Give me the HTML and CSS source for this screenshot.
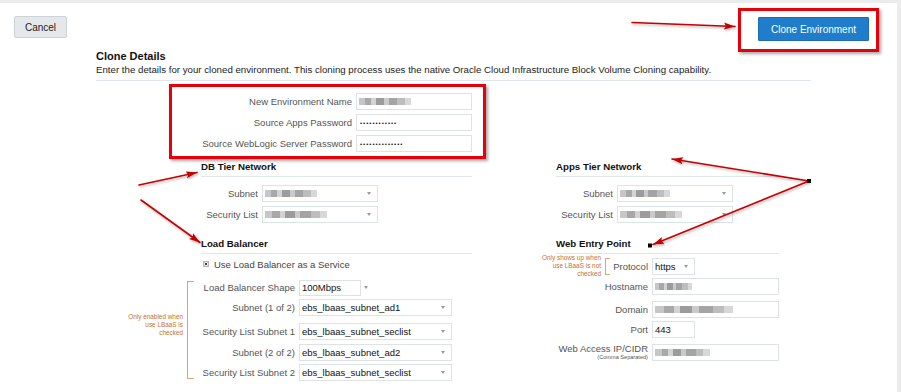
FILE: index.html
```html
<!DOCTYPE html>
<html>
<head>
<meta charset="utf-8">
<title>Clone Environment</title>
<link rel="stylesheet" href="styles.css">
</head>
<body>
<div class="page">
  <div class="topbar">
    <button class="btn-cancel">Cancel</button>
    <div class="callout callout-btn"><button class="btn-primary">Clone Environment</button></div>
  </div>

  <div class="content">
    <h1 class="title">Clone Details</h1>
    <p class="desc">Enter the details for your cloned environment. This cloning process uses the native Oracle Cloud Infrastructure Block Volume Cloning capability.</p>

    <div class="callout callout-fields">
      <div class="row"><label class="lbl lbl-main">New Environment Name</label><div class="field w116"><span class="mosaic m-env"></span></div></div>
      <div class="row"><label class="lbl lbl-main">Source Apps Password</label><div class="field w116"><span class="dots">••••••••••••</span></div></div>
      <div class="row"><label class="lbl lbl-main">Source WebLogic Server Password</label><div class="field w116"><span class="dots">••••••••••••••</span></div></div>
    </div>

    <div class="columns">
      <div class="col col-left">
        <section class="sec">
          <h2 class="sec-title">DB Tier Network</h2>
          <div class="rows net-rows">
            <div class="row"><label class="lbl lbl-dbnet">Subnet</label><div class="field select w116"><span class="mosaic m-dbsub"></span><i class="caret"></i></div></div>
            <div class="row"><label class="lbl lbl-dbnet">Security List</label><div class="field select w116"><span class="mosaic m-dbsec"></span><i class="caret"></i></div></div>
          </div>
        </section>
        <section class="sec sec-second">
          <h2 class="sec-title">Load Balancer</h2>
          <div class="check-row">
            <svg class="checkbox" width="6" height="6" viewBox="0 0 6 6"><rect x="0.5" y="0.5" width="5" height="5" fill="#f4f4f4" stroke="#b5b5b5"/><path d="M1.8 1.8 L4.2 4.2 M4.2 1.8 L1.8 4.2" stroke="#222" stroke-width="0.9"/></svg>
            <span>Use Load Balancer as a Service</span>
          </div>
          <div class="rows lb-rows">
            <span class="bracket lb-bracket"></span>
            <div class="note lb-note">Only enabled when<br>use LBaaS is<br>checked</div>
            <div class="row"><label class="lbl lbl-lb">Load Balancer Shape</label><div class="field w62 shape">100Mbps</div><i class="caret caret-out"></i></div>
            <div class="row"><label class="lbl lbl-lb">Subnet (1 of 2)</label><div class="field select w153">ebs_lbaas_subnet_ad1<i class="caret"></i></div></div>
            <div class="row push4"><label class="lbl lbl-lb">Security List Subnet 1</label><div class="field select w153">ebs_lbaas_subnet_seclist<i class="caret"></i></div></div>
            <div class="row push1"><label class="lbl lbl-lb">Subnet (2 of 2)</label><div class="field select w153">ebs_lbaas_subnet_ad2<i class="caret"></i></div></div>
            <div class="row"><label class="lbl lbl-lb">Security List Subnet 2</label><div class="field select w153">ebs_lbaas_subnet_seclist<i class="caret"></i></div></div>
          </div>
        </section>
      </div>

      <div class="col col-right">
        <section class="sec">
          <h2 class="sec-title">Apps Tier Network</h2>
          <div class="rows net-rows">
            <div class="row"><label class="lbl lbl-apnet">Subnet</label><div class="field select w116"><span class="mosaic m-apsub"></span><i class="caret"></i></div></div>
            <div class="row"><label class="lbl lbl-apnet">Security List</label><div class="field select w116"><span class="mosaic m-apsec"></span><i class="caret"></i></div></div>
          </div>
        </section>
        <section class="sec sec-second">
          <h2 class="sec-title">Web Entry Point</h2>
          <div class="rows web-rows">
            <span class="bracket web-bracket"></span>
            <div class="note web-note">Only shows up when<br>use LBaaS is not<br>checked</div>
            <div class="row"><label class="lbl lbl-web">Protocol</label><div class="field select w43">https<i class="caret"></i></div></div>
            <div class="row"><label class="lbl lbl-web">Hostname</label><div class="field w127"><span class="mosaic m-host"></span></div></div>
            <div class="row push3"><label class="lbl lbl-web">Domain</label><div class="field w127"><span class="mosaic m-dom"></span></div></div>
            <div class="row"><label class="lbl lbl-web">Port</label><div class="field w43">443</div></div>
            <div class="row push3 row-top"><label class="lbl lbl-web lbl-stack">Web Access IP/CIDR<small>(Comma Separated)</small></label><div class="field w127"><span class="mosaic m-web"></span></div></div>
          </div>
        </section>
      </div>
    </div>
  </div>
</div>

<svg class="annotations" width="901" height="392" viewBox="0 0 901 392">
  <defs>
    <marker id="head" markerUnits="userSpaceOnUse" markerWidth="12" markerHeight="8" refX="11" refY="4" orient="auto">
      <path d="M0,0.5 L11,4 L0,7.5 L2,4 z" fill="#c40000"/>
    </marker>
    <filter id="shadow" x="-10%" y="-10%" width="130%" height="140%">
      <feDropShadow dx="1" dy="1.5" stdDeviation="1" flood-color="#000" flood-opacity="0.3"/>
    </filter>
  </defs>
  <g filter="url(#shadow)" stroke="#c40000" stroke-width="1.6" fill="none" stroke-linecap="round">
    <line x1="632" y1="22.5" x2="735" y2="26.5" marker-end="url(#head)"/>
    <line x1="139" y1="185" x2="197" y2="172.5" marker-end="url(#head)"/>
    <line x1="141" y1="200" x2="200" y2="242.5" marker-end="url(#head)"/>
    <line x1="809" y1="181" x2="672" y2="159" marker-end="url(#head)"/>
    <line x1="809" y1="181" x2="653" y2="244.5" marker-end="url(#head)"/>
  </g>
  <rect x="807" y="179" width="4" height="4" fill="#000"/>
  <rect x="648" y="243.5" width="4" height="4" fill="#000"/>
</svg>
</body>
</html>
```

FILE: styles.css
```css
* { box-sizing: border-box; }

html, body {
  margin: 0;
  padding: 0;
}

body {
  position: relative;
  width: 901px;
  height: 392px;
  overflow: hidden;
  background: #ececec;
  font-family: "Liberation Sans", Arial, Helvetica, sans-serif;
  color: #222;
}

.page {
  margin-top: 3px;
  width: 897px;
  height: 389px;
  background: #fff;
}

/* ---------- top bar ---------- */
.topbar {
  display: flex;
  justify-content: space-between;
  align-items: flex-start;
  height: 49px;
  padding: 0 18px 0 14px;
}

.btn-cancel {
  margin-top: 13px;
  width: 53px;
  height: 22px;
  padding: 0;
  background: #e5e8eb;
  border: 1px solid #cdd2d7;
  border-radius: 2px;
  font: 10px "Liberation Sans", Arial, sans-serif;
  color: #222;
}

.callout {
  border: 3px solid #e6000a;
  box-shadow: 2px 2px 3px rgba(0, 0, 0, 0.35);
}

.callout-btn {
  margin-top: 5px;
  padding: 6px 7px 8px 17px;
}

.btn-primary {
  display: block;
  width: 111px;
  height: 24px;
  padding: 0;
  background: #1f7dcb;
  border: 1px solid #1a6db3;
  border-radius: 1px;
  color: #fff;
  font: 10px "Liberation Sans", Arial, sans-serif;
}

/* ---------- content ---------- */
.content {
  margin-left: 96px;
  width: 715px;
}

.title {
  margin: -2px 0 0;
  font-size: 11px;
  line-height: 13px;
  font-weight: bold;
  color: #111;
}

.desc {
  margin: 1px 0 0;
  padding-bottom: 4px;
  font-size: 9.7px;
  line-height: 12px;
  color: #222;
  border-bottom: 1px solid #dde5ed;
}

.callout-fields {
  display: flex;
  flex-direction: column;
  gap: 4px;
  width: 317px;
  margin: 3px 0 0 73px;
  padding: 6px 11px 4px 0;
}

/* ---------- rows / fields ---------- */
.row {
  display: flex;
  align-items: center;
  height: 17px;
}

.row-top { align-items: flex-start; }

.lbl {
  flex: none;
  margin-right: 4px;
  text-align: right;
  white-space: nowrap;
  font-size: 9.5px;
  color: #555;
}

.lbl-main { width: 180px; }
.lbl-dbnet { width: 57px; }
.lbl-apnet { width: 57px; }
.lbl-lb { width: 94px; }
.lbl-web { width: 92px; }

.lbl-stack {
  line-height: 10px;
}

.lbl-stack small {
  display: block;
  font-size: 5.6px;
  line-height: 7px;
  color: #555;
}

.field {
  display: flex;
  align-items: center;
  height: 17px;
  padding-left: 2px;
  background: #fff;
  border: 1px solid #dde2e6;
  font-size: 9.5px;
  color: #111;
  white-space: nowrap;
  overflow: hidden;
}

.w116 { width: 116px; }
.w153 { width: 153px; }
.w62 { width: 62px; }
.w43 { width: 43px; }
.w127 { width: 127px; }

.shape { height: 16px; }

.caret {
  flex: none;
  margin-left: auto;
  margin-right: 6px;
  width: 0;
  height: 0;
  border-left: 2.5px solid transparent;
  border-right: 2.5px solid transparent;
  border-top: 3px solid #9a9a9a;
}

.caret-out {
  margin-left: 3px;
  margin-right: 0;
}

.dots {
  font-size: 6px;
  letter-spacing: 1px;
  color: #111;
  padding-left: 1px;
}

.mosaic {
  display: block;
  height: 7px;
  background: linear-gradient(90deg,
    #c6c6c6 0 12%, #a8a8a8 12% 24%, #d3d3d3 24% 32%, #9c9c9c 32% 48%,
    #cacaca 48% 57%, #a4a4a4 57% 74%, #bdbdbd 74% 88%, #d8d8d8 88% 100%);
  filter: blur(0.6px);
}

.m-env { width: 52px; }
.m-dbsub { width: 52px; }
.m-dbsec { width: 62px; }
.m-apsub { width: 50px; }
.m-apsec { width: 62px; }
.m-host { width: 37px; }
.m-dom { width: 78px; }
.m-web { width: 55px; }

/* ---------- columns ---------- */
.columns {
  display: flex;
  gap: 84px;
  margin: 2px 0 0 105px;
}

.col-left { width: 271px; }
.col-right { width: 223px; }

.sec-title {
  margin: 0;
  padding-bottom: 3px;
  font-size: 9.7px;
  line-height: 12px;
  font-weight: bold;
  color: #111;
  border-bottom: 1px solid #e2e7ec;
}

.sec-second { margin-top: 15px; }

.rows {
  display: flex;
  flex-direction: column;
}

.net-rows {
  margin-top: 8px;
  gap: 4px;
}

.check-row {
  display: flex;
  align-items: center;
  gap: 5px;
  height: 12px;
  margin-top: 4px;
  padding-left: 2px;
  font-size: 9.5px;
  color: #444;
}

.checkbox { flex: none; }

.lb-rows {
  position: relative;
  margin-top: 9px;
  gap: 3px;
}

.push4 { margin-top: 4px; }
.push1 { margin-top: 1px; }
.push3 { margin-top: 3px; }

.web-rows {
  position: relative;
  margin-top: 4px;
  gap: 3px;
}

/* ---------- annotations ---------- */
.bracket {
  position: absolute;
  border: 1.5px solid #dfa56c;
  border-right: none;
}

.note {
  position: absolute;
  text-align: right;
  font-size: 6.4px;
  line-height: 8px;
  color: #c8702c;
  white-space: nowrap;
}

.lb-bracket { left: -14px; top: 2px; width: 7px; height: 98px; }
.lb-note { left: -81px; top: 34px; width: 63px; }

.web-bracket { left: 49px; top: 0; width: 5px; height: 17px; }
.web-note { left: -25px; top: -4px; width: 70px; }

.annotations {
  position: absolute;
  top: 0;
  left: 0;
  pointer-events: none;
}
```
